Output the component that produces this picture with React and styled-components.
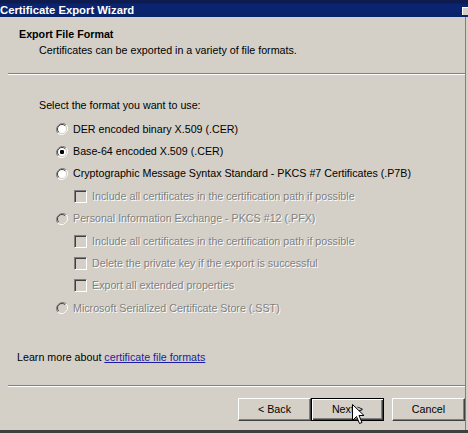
import React from "react";
import styled, { createGlobalStyle } from "styled-components";

const Global = createGlobalStyle`
  html, body { margin: 0; padding: 0; background: #d4d0c8; }
  body { font-family: "Liberation Sans", Arial, sans-serif; font-size: 10.7px; }
`;

const Window = styled.div`
  width: 468px;
  height: 433px;
  overflow: hidden;
  background: #d4d0c8;
  display: flex;
  flex-direction: column;
  position: relative;
  box-sizing: border-box;
  border-bottom: 3px solid #404040;
`;

const TitleBar = styled.div`
  height: 17px;
  flex: none;
  background: linear-gradient(180deg, #0d1b4e 0px, #0d1b4e 3px, #0a2473 4px, #0a246a 100%);
  display: flex;
  align-items: center;
  justify-content: space-between;
  padding-top: 2px;
  box-sizing: border-box;
`;

const TitleText = styled.span`
  color: #ffffff;
  font-weight: bold;
  font-size: 11.3px;
  white-space: nowrap;
`;

const CloseStub = styled.span`
  width: 5px;
  height: 7px;
  margin-top: 3px;
  background: #d4d0c8;
  border-top: 1px solid #fff;
  border-left: 1px solid #fff;
`;

const Body = styled.div`
  flex: 1;
  display: flex;
  flex-direction: column;
  border-right: 1px solid #808080;
  margin-right: 2px;
`;

const Header = styled.div`
  height: 56px;
  flex: none;
  box-sizing: border-box;
  padding: 11px 0 0 19px;
  display: flex;
  flex-direction: column;
  gap: 3px;
`;

const HeaderTitle = styled.div`
  font-weight: bold;
  font-size: 10.7px;
  line-height: 13px;
  color: #000;
`;

const HeaderSub = styled.div`
  line-height: 13px;
  margin-left: 20px;
  color: #000;
`;

const Separator = styled.div`
  height: 0;
  flex: none;
  border-top: 1px solid #808080;
  border-bottom: 1px solid #ffffff;
  margin: 0 0 0 8px;
`;

const Content = styled.div`
  padding: 24px 0 0 39px;
  display: flex;
  flex-direction: column;
`;

const Prompt = styled.div`
  line-height: 13px;
  margin-bottom: 6px;
`;

const Row = styled.label`
  height: 22.4px;
  display: flex;
  align-items: center;
  gap: 5px;
  padding-left: ${(p) => (p.$check ? "35px" : "17px")};
  color: ${(p) => (p.$disabled ? "#808080" : "#000")};
  text-shadow: ${(p) => (p.$disabled ? "1px 1px 0 #ffffff" : "none")};
  white-space: nowrap;
  line-height: 13px;
`;

const CheckBox = styled.span`
  width: 13px;
  height: 13px;
  box-sizing: border-box;
  flex: none;
  border: 1px solid;
  border-color: #808080 #ffffff #ffffff #808080;
  box-shadow: inset 1px 1px 0 #404040, inset -1px -1px 0 #d4d0c8;
  background: ${(p) => (p.$disabled ? "#d4d0c8" : "#ffffff")};
`;

const Learn = styled.div`
  margin: 31px 0 0 17px;
  line-height: 13px;
`;

const Link = styled.a`
  color: #1c1ca0;
  text-decoration: underline;
`;

const BottomSep = styled(Separator)`
  margin-top: 21px;
`;

const ButtonBar = styled.div`
  display: flex;
  padding: 11px 0 0 238px;
  align-items: flex-start;
  position: relative;
`;

const Button = styled.button`
  width: 75px;
  height: 23px;
  box-sizing: border-box;
  margin: 0;
  margin-left: ${(p) => p.$gap || 0}px;
  padding: 0;
  font-family: "Liberation Sans", Arial, sans-serif;
  font-size: 10.7px;
  color: #000;
  background: #d4d0c8;
  border: 1px solid;
  border-color: ${(p) => (p.$default ? "#000" : "#ffffff #404040 #404040 #ffffff")};
  box-shadow: ${(p) =>
    p.$default
      ? "inset 1px 1px 0 #ffffff, inset -1px -1px 0 #404040, inset -2px -2px 0 #808080"
      : "inset -1px -1px 0 #808080, inset 1px 1px 0 #d4d0c8"};
`;

const Cursor = styled.svg`
  position: absolute;
  left: 352px;
  top: 17px;
`;

function Radio({ checked, disabled }) {
  return (
    <svg width="12" height="12" viewBox="0 0 12 12" style={{ flex: "none" }}>
      <path d="M10.2 1.8 A6 6 0 0 0 1.8 10.2" fill="none" stroke="#808080" strokeWidth="1" />
      <path d="M1.8 10.2 A6 6 0 0 0 10.2 1.8" fill="none" stroke="#ffffff" strokeWidth="1" />
      <circle cx="6" cy="6" r="4.5" fill={disabled ? "#d4d0c8" : "#ffffff"} />
      <path d="M9.2 2.8 A4.5 4.5 0 0 0 2.8 9.2" fill="none" stroke="#404040" strokeWidth="1" />
      <path d="M2.8 9.2 A4.5 4.5 0 0 0 9.2 2.8" fill="none" stroke="#d4d0c8" strokeWidth="1" />
      {checked && <rect x="4" y="4" width="4" height="4" rx="1.2" fill="#000" />}
    </svg>
  );
}

const items = [
  { type: "radio", text: "DER encoded binary X.509 (.CER)" },
  { type: "radio", text: "Base-64 encoded X.509 (.CER)", checked: true },
  { type: "radio", text: "Cryptographic Message Syntax Standard - PKCS #7 Certificates (.P7B)" },
  { type: "check", text: "Include all certificates in the certification path if possible", disabled: true },
  { type: "radio", text: "Personal Information Exchange - PKCS #12 (.PFX)", disabled: true },
  { type: "check", text: "Include all certificates in the certification path if possible", disabled: true },
  { type: "check", text: "Delete the private key if the export is successful", disabled: true },
  { type: "check", text: "Export all extended properties", disabled: true },
  { type: "radio", text: "Microsoft Serialized Certificate Store (.SST)", disabled: true },
];

export default function App() {
  return (
    <>
      <Global />
      <Window>
        <TitleBar>
          <TitleText>Certificate Export Wizard</TitleText>
          <CloseStub />
        </TitleBar>
        <Body>
          <Header>
            <HeaderTitle>Export File Format</HeaderTitle>
            <HeaderSub>Certificates can be exported in a variety of file formats.</HeaderSub>
          </Header>
          <Separator />
          <Content>
            <Prompt>Select the format you want to use:</Prompt>
            {items.map((it, i) => (
              <Row key={i} $check={it.type === "check"} $disabled={it.disabled}>
                {it.type === "radio" ? (
                  <Radio checked={it.checked} disabled={it.disabled} />
                ) : (
                  <CheckBox $disabled={it.disabled} />
                )}
                <span>{it.text}</span>
              </Row>
            ))}
          </Content>
          <Learn>
            Learn more about <Link href="#">certificate file formats</Link>
          </Learn>
          <BottomSep />
          <ButtonBar>
            <Button>&lt; Back</Button>
            <Button $default>Next &gt;</Button>
            <Button $gap={8}>Cancel</Button>
            <Cursor width="13" height="21" viewBox="0 0 13 21">
              <path d="M0.5 0.5 L0.5 16.5 L4.5 12.5 L7.5 19.5 L10 18.5 L7 11.5 L12 11.5 Z" fill="#ffffff" stroke="#000" strokeWidth="1" />
            </Cursor>
          </ButtonBar>
        </Body>
      </Window>
    </>
  );
}
